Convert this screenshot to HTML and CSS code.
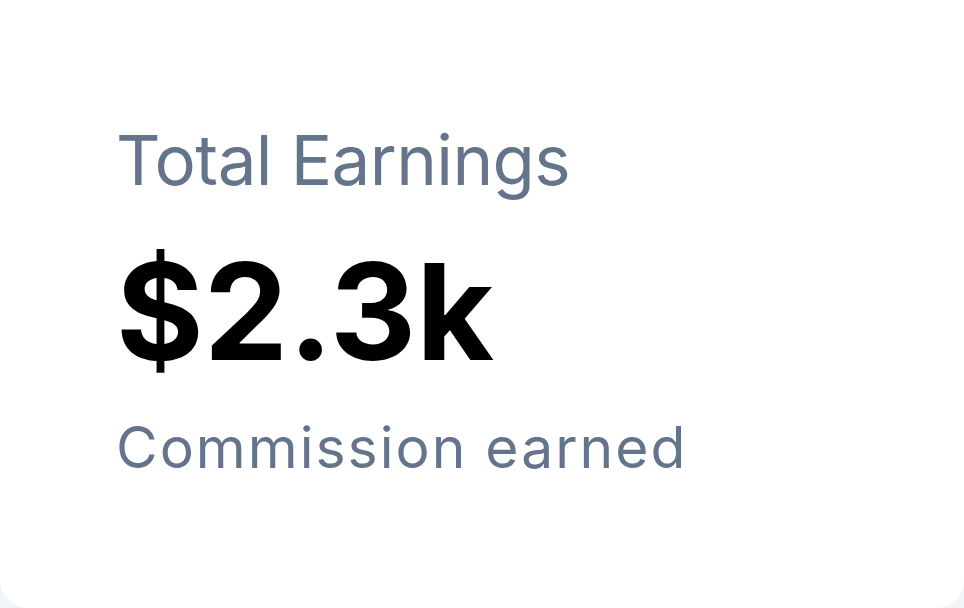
FILE: index.html
```html
<!DOCTYPE html>
<html lang="en">
<head>
<meta charset="utf-8">
<title>Total Earnings</title>
<link rel="stylesheet" href="styles.css">
</head>
<body>
<div class="card">
  <div class="label">Total Earnings</div>
  <div class="value">$2.3k</div>
  <div class="sub">Commission earned</div>
</div>
</body>
</html>
```
FILE: styles.css
```css
html, body {
  margin: 0;
  padding: 0;
  background: #f1f5f9;
}
body {
  width: 964px;
  height: 608px;
  overflow: hidden;
  font-family: Inter, "Noto Sans", sans-serif;
}
.card {
  box-sizing: border-box;
  width: 964px;
  height: 608px;
  background: #ffffff;
  border-radius: 0 0 28px 28px;
  padding: 118px 0 0 116px;
  display: flex;
  flex-direction: column;
}
.label {
  font-size: 69px;
  line-height: 84px;
  color: #64748b;
  font-weight: 400;
  letter-spacing: -0.6px;
}
.value {
  font-size: 134px;
  line-height: 160px;
  font-weight: 700;
  color: #000000;
  margin-top: 29px;
}
.sub {
  font-size: 57px;
  line-height: 68px;
  color: #64748b;
  letter-spacing: 2px;
  margin-top: 23px;
}
```
